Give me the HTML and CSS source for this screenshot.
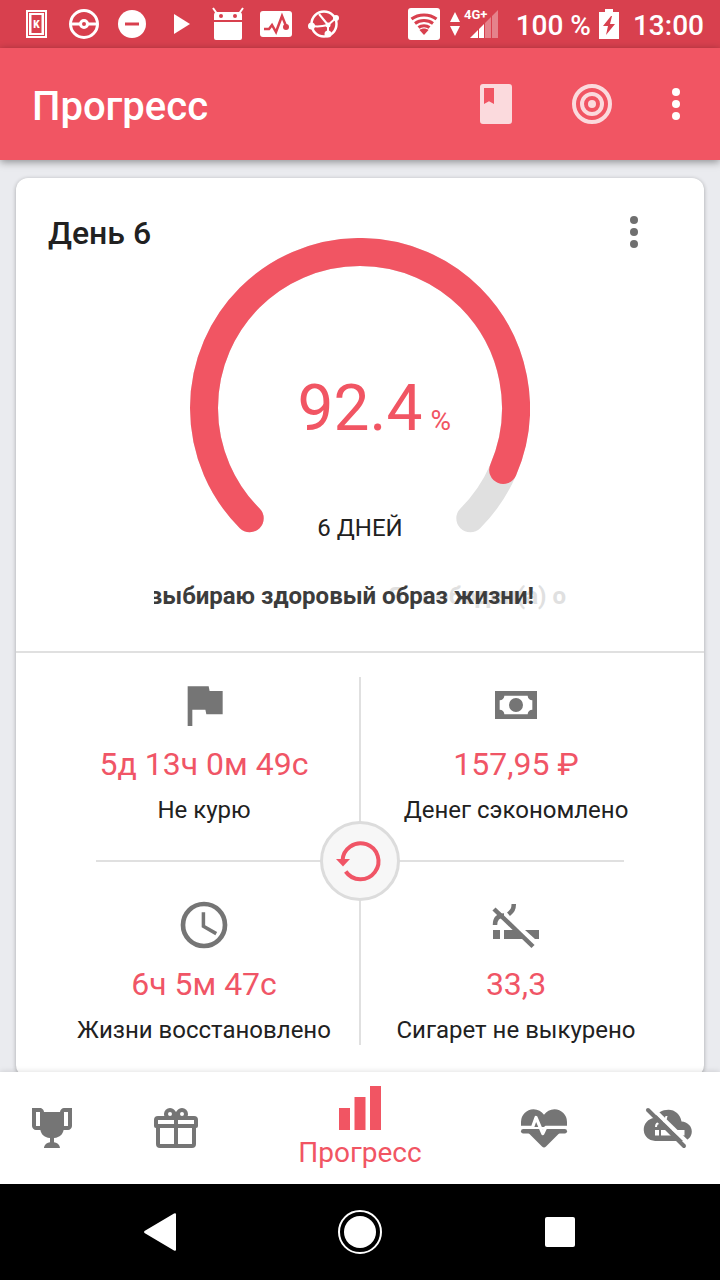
FILE: index.html
```html
<!DOCTYPE html>
<html lang="ru">
<head>
    <meta charset="UTF-8">
    <meta name="viewport" content="width=device-width, initial-scale=1.0">
    <title>Прогресс</title>
    <link rel="stylesheet" href="styles.css">
</head>
<body>
    <div class="status-bar">
        <div class="status-icons">
            <svg viewBox="0 0 48 48">
                <rect x="14" y="10" width="21" height="28" fill="#fff"/>
                <rect x="16.500" y="12.500" width="16" height="23" fill="none" stroke="#d8404e"/>
                <rect x="19.500" y="15" width="10" height="18" fill="#d8404e"/>
                <text class="k-letter" x="24.500" y="28" text-anchor="middle">K</text>
            </svg>
            <svg viewBox="0 0 48 48" fill="none" stroke="#fff" stroke-width="3">
                <circle cx="24" cy="24" r="13.500"/>
                <circle cx="24" cy="24" r="3.500"/>
                <path d="M11 24h9.500M27.500 24H37"/>
            </svg>
            <svg viewBox="0 0 48 48">
                <circle cx="24" cy="24" r="14" fill="#fff"/>
                <path d="M17 24h14" stroke="#d8404e" stroke-width="3"/>
            </svg>
            <svg viewBox="0 0 48 48"><path d="M18 14l16 10-16 10z" fill="#fff"/></svg>
            <svg viewBox="0 0 48 48">
                <path d="M10 22h28v16a2 2 0 0 1-2 2H12a2 2 0 0 1-2-2zM10 20v-5c0-2 1-3 3-3h22c2 0 3 1 3 3v5z" fill="#fff"/>
                <path d="M9 8l3.500 5M39 8l-3.500 5" stroke="#fff" stroke-width="2"/>
                <circle cx="17" cy="16" r="2" fill="#d8404e"/>
                <circle cx="31" cy="16" r="2" fill="#d8404e"/>
            </svg>
            <svg viewBox="0 0 48 48">
                <rect x="8" y="11" width="32" height="26" rx="3" fill="#fff"/>
                <path d="M12 29h5l3-4 4 7 6-16 4 10" fill="none" stroke="#d8404e" stroke-width="2.500"/>
                <circle cx="34" cy="27" r="3" fill="#d8404e"/>
            </svg>
            <svg viewBox="0 0 48 48" fill="none" stroke="#fff">
                <circle cx="24" cy="24" r="12.500" stroke-width="2.500"/>
                <path d="M12 26c6 1 12 0 16-1l8-7M28 25l-9-11M28 25v9" stroke-width="2"/>
                <g fill="#fff" stroke="none">
                    <circle cx="11.500" cy="26" r="3.500"/>
                    <circle cx="28" cy="25" r="2.500"/>
                    <circle cx="36" cy="18" r="3"/>
                    <circle cx="28" cy="34" r="3.500"/>
                </g>
            </svg>
        </div>
        <div class="status-info">
            <svg class="wifi" viewBox="0 0 32 32">
                <rect width="32" height="32" rx="3" fill="#fff"/>
                <g fill="none" stroke="#d8404e" stroke-width="3">
                    <path d="M3.500 11c7-5.500 18-5.500 25 0"/>
                    <path d="M7 15.500c5-4 13-4 18 0"/>
                    <path d="M10.500 19.500c3-2.500 8-2.500 11 0"/>
                </g>
                <path d="M11.500 22c2.500-2 6.500-2 9 0L16 27z" fill="#d8404e"/>
            </svg>
            <svg class="signal" viewBox="0 0 48 32">
                <path d="M0 14l5-10 5 10zM0 18h10L5 28z" fill="#fff"/>
                <text class="signal-label" x="14" y="11">4G+</text>
                <path d="M20 30l8-8v8zM29 21l5-5v14h-5z" fill="#fff"/>
                <path d="M35 15l6-6v21h-6zM42 8l6-6v28h-6z" fill="#fff" opacity=".35"/>
            </svg>
            <span class="charge">100 %</span>
            <svg class="battery" viewBox="0 0 20 30">
                <path d="M6 0h8v3h6v27H0V3h6z" fill="#fff"/>
                <path d="M12 7L4 17h5l-2 9 9-11h-5l2-8z" fill="#d8404e"/>
            </svg>
            <span class="clock">13:00</span>
        </div>
    </div>

    <header class="app-bar">
        <h1>Прогресс</h1>
        <button class="bar-button" aria-label="Дневник">
            <svg class="icon faded" viewBox="0 0 24 24"><path fill-rule="evenodd" d="M5.500 2h13A1.500 1.500 0 0 1 20 3.500v17a1.500 1.500 0 0 1-1.500 1.500h-13A1.500 1.500 0 0 1 4 20.500v-17A1.500 1.500 0 0 1 5.500 2zM6 4v8l2.500-1.400L11 12V4z"/></svg>
        </button>
        <button class="bar-button" aria-label="Цель">
            <svg class="icon" viewBox="0 0 48 48" fill="none" stroke="#fbdadd" stroke-width="4">
                <circle cx="24" cy="24" r="18"/>
                <circle cx="24" cy="24" r="10"/>
                <circle cx="24" cy="24" r="4" fill="#fbdadd" stroke="none"/>
            </svg>
        </button>
        <button class="bar-button narrow" aria-label="Ещё">
            <svg class="icon" viewBox="0 0 24 24"><circle cx="12" cy="6" r="2"/><circle cx="12" cy="12" r="2"/><circle cx="12" cy="18" r="2"/></svg>
        </button>
    </header>

    <main>
        <section class="card">
            <div class="day">
                <h2>День 6</h2>
                <div class="gauge">
                    <!-- 270 degree arc, pathLength makes the dash a percentage -->
                    <svg viewBox="0 0 340 340" fill="none" stroke-width="28" stroke-linecap="round">
                        <path d="M59.700 280.300A156 156 0 1 1 280.300 280.300" stroke="#e0e0e0"/>
                        <path d="M59.700 280.300A156 156 0 1 1 280.300 280.300" stroke="#f15563" pathLength="100" stroke-dasharray="92 100"/>
                    </svg>
                    <div class="gauge-value"><span class="number">92.4</span><span class="percent">%</span></div>
                    <div class="gauge-goal">6 ДНЕЙ</div>
                </div>
                <button class="card-menu" aria-label="Меню карточки">
                    <svg viewBox="0 0 28 36"><circle cx="14" cy="6" r="4"/><circle cx="14" cy="18" r="4"/><circle cx="14" cy="30" r="4"/></svg>
                </button>
                <div class="ticker">
                    <span class="phrase next">Я свободен(а) о</span>
                    <span class="phrase current">Я выбираю здоровый образ жизни!</span>
                </div>
            </div>

            <div class="stats">
                <div class="stat">
                    <svg viewBox="0 0 24 24"><path d="M14.400 6L14 4H5v17h2v-7h5.600l.4 2h7V6z"/></svg>
                    <strong>5д 13ч 0м 49с</strong>
                    <span>Не курю</span>
                </div>
                <div class="stat">
                    <svg viewBox="0 0 24 24"><path d="M3 6h18v12H3V6m9 3a3 3 0 0 1 3 3 3 3 0 0 1-3 3 3 3 0 0 1-3-3 3 3 0 0 1 3-3M7 8a2 2 0 0 1-2 2v4a2 2 0 0 1 2 2h10a2 2 0 0 1 2-2v-4a2 2 0 0 1-2-2H7z"/></svg>
                    <strong>157,95 ₽</strong>
                    <span>Денег сэкономлено</span>
                </div>
                <div class="stat">
                    <svg viewBox="0 0 24 24" fill="none" stroke="#757575"><circle cx="12" cy="12" r="9" stroke-width="2"/><path d="M11.750 6.500v6l5.500 3.200" stroke-width="1.500"/></svg>
                    <strong>6ч 5м 47с</strong>
                    <span>Жизни восстановлено</span>
                </div>
                <div class="stat">
                    <svg viewBox="0 0 56 56">
                        <path d="M5 33h7v9H5zM16 33h13l9 9H16zM37 33h14v9h-4z"/>
                        <path d="M6 12l39 37.500" stroke="#757575" stroke-width="4.500"/>
                        <path d="M25.800 7c0 5-1.500 7-5.300 10.300M7 28c0-6 3-9.500 9-9.500" fill="none" stroke="#757575" stroke-width="4.500"/>
                    </svg>
                    <strong>33,3</strong>
                    <span>Сигарет не выкурено</span>
                </div>
                <button class="reset" aria-label="Обновить">
                    <svg viewBox="0 0 56 56">
                        <path d="M13.700 38.500A18 18 0 1 0 10.500 28" fill="none" stroke="#f05566" stroke-width="4"/>
                        <path d="M4 26h14l-7 7.500z" fill="#f05566"/>
                    </svg>
                </button>
            </div>
        </section>
    </main>

    <nav class="tabs">
        <a href="#" aria-label="Достижения">
            <svg class="icon" viewBox="0 0 24 24"><path d="M20.200 2H18c-.9 0-2 1-2 2H8c0-1-1.100-2-2-2H2v9c0 1 1 2 2 2h2.200c.4 2 1.700 3.700 4.800 4v2.080C8 19.540 8 22 8 22h8s0-2.460-3-2.920V17c3.100-.3 4.400-2 4.800-4H20c1 0 2-1 2-2V2h-1.800M4 11V4h2v7H4m16 0h-2V4h2v7z"/></svg>
        </a>
        <a href="#" aria-label="Награды">
            <svg class="icon" viewBox="0 0 24 24"><path d="M22,12V20A2,2 0 0,1 20,22H4A2,2 0 0,1 2,20V12A1,1 0 0,1 1,11V8A2,2 0 0,1 3,6H6.170C6.060,5.690 6,5.350 6,5A3,3 0 0,1 9,2C10,2 10.880,2.500 11.430,3.240L12,4L12.570,3.240C13.120,2.500 14,2 15,2A3,3 0 0,1 18,5C18,5.350 17.940,5.690 17.830,6H21A2,2 0 0,1 23,8V11A1,1 0 0,1 22,12M4,20H11V12H4V20M20,20V12H13V20H20M9,4A1,1 0 0,0 8,5A1,1 0 0,0 9,6A1,1 0 0,0 10,5A1,1 0 0,0 9,4M15,4A1,1 0 0,0 14,5A1,1 0 0,0 15,6A1,1 0 0,0 16,5A1,1 0 0,0 15,4M3,8V10H11V8H3M13,8V10H21V8H13Z"/></svg>
        </a>
        <a href="#" class="active">
            <svg class="bars" viewBox="0 0 42 44"><path d="M0 22h11v22H0zM15.500 11h11v33h-11zM31 0h11v44H31z"/></svg>
            Прогресс
        </a>
        <a href="#" aria-label="Здоровье">
            <svg class="icon large" viewBox="0 0 56 56">
                <path d="M5 27V22A12.700 12.700 0 0 1 17.500 9.300C22 9.300 25.500 11.500 28 14.800 30.500 11.500 34 9.300 38.500 9.300A12.700 12.700 0 0 1 51 22v5z"/>
                <path d="M12 31h32v1.500L30 46.500q-2 2-4 0L12 32.500z"/>
                <path d="M7.200 31.200h41.600" stroke="#757575" stroke-width="4.400" stroke-linecap="round"/>
                <path d="M4 27.400h12.500L20 17.500l6.800 16 3-6.100H52" fill="none" stroke="#fff" stroke-width="3.200" stroke-linejoin="round"/>
            </svg>
        </a>
        <a href="#" aria-label="Без дыма">
            <svg class="icon large" viewBox="0 0 56 56">
                <path d="M16 41A11.500 11.500 0 0 1 14.500 18C17 13 22 9.700 28.500 9.700c6.500 0 12 4.800 13 11.800 6 .5 10.300 4.500 10.300 10 0 5.500-4.300 9.500-9.300 9.500z"/>
                <path d="M15 30h4v5.500h-4zM21 30h8l5 5.500H21zM32 30h12.500v5.500H38z" fill="#fff"/>
                <path d="M16 27c0-2.500 1-4 3.500-4M26.500 16c0 3-1 4-3 6" fill="none" stroke="#fff" stroke-width="2"/>
                <path d="M11 7l38 37" stroke="#fff" stroke-width="4"/>
                <path d="M8 10l36 36" stroke="#757575" stroke-width="4" stroke-linecap="round"/>
            </svg>
        </a>
    </nav>

    <div class="system-nav">
        <button aria-label="Назад"><svg viewBox="0 0 48 48"><path d="M8.500 23L38 5.500q2-1 2 1v35q0 2-2 1L8.500 25q-1-1 0-2z"/></svg></button>
        <button aria-label="Домой"><svg viewBox="0 0 48 48"><circle cx="24" cy="24" r="16"/><circle cx="24" cy="24" r="21" fill="none" stroke="#fff" stroke-width="2"/></svg></button>
        <button aria-label="Недавние"><svg viewBox="0 0 48 48"><rect x="9" y="9" width="30" height="30" rx="2"/></svg></button>
    </div>
</body>
</html>
```
FILE: styles.css
```css
* {
    box-sizing: border-box;
}

body {
    margin: 0;
    height: 100vh;
    display: flex;
    flex-direction: column;
    background: #eaebef;
    color: #212121;
    font-family: Roboto, sans-serif;
    font-size: 24px;
}

h1, h2 {
    margin: 0;
    font-weight: 500;
}

svg {
    display: block;
    fill: currentColor;
}

svg[fill="none"] {
    fill: none;
}

button {
    padding: 0;
    border: 0;
    background: none;
    color: inherit;
    display: flex;
    align-items: center;
    justify-content: center;
    cursor: pointer;
}

.icon {
    width: 48px;
    height: 48px;
}

.icon.large {
    width: 56px;
    height: 56px;
}

/* Status bar */
.status-bar {
    flex: none;
    height: 48px;
    padding: 0 16px 0 12px;
    display: flex;
    align-items: center;
    justify-content: space-between;
    background: #d8404e;
    color: #fff;
    font-size: 28px;
    font-weight: 500;
    line-height: 44px;
}

.status-icons {
    display: flex;
}

.status-icons svg {
    width: 48px;
    height: 48px;
}

.k-letter {
    font-size: 10px;
    font-weight: 900;
    fill: #fff;
}

.status-info {
    display: flex;
    align-items: center;
}

.charge,
.clock {
    padding-top: 4px;
}

.wifi {
    width: 32px;
    height: 32px;
}

.signal {
    width: 48px;
    height: 32px;
    margin: 0 18px 0 10px;
}

.signal-label {
    font-size: 13px;
    font-weight: 700;
}

.battery {
    width: 20px;
    height: 30px;
    margin: 0 14px 0 8px;
}

/* App bar */
.app-bar {
    flex: none;
    height: 112px;
    padding: 0 8px 0 32px;
    display: flex;
    align-items: center;
    background: #f15563;
    color: #fff;
    box-shadow: 0 2px 8px rgba(0, 0, 0, 0.4);
    z-index: 1;
}

.app-bar h1 {
    flex: 1;
    padding-top: 6px;
    font-size: 40px;
    line-height: 48px;
}

.bar-button {
    width: 96px;
    height: 96px;
}

.bar-button.narrow {
    width: 72px;
}

.faded {
    color: #fbdadd;
}

/* Progress card */
main {
    flex: 1;
    min-height: 0;
    padding: 18px 16px;
    overflow: auto;
    scrollbar-width: none;
}

.card {
    background: #fff;
    border-radius: 12px;
    box-shadow: 0 1px 4px rgba(0, 0, 0, 0.3);
}

.day {
    padding: 36px 32px 41px;
    display: grid;
    grid-template-columns: 1fr 340px 1fr;
    border-bottom: 2px solid #e0e0e0;
}

.day h2 {
    font-size: 32px;
    line-height: 38px;
}

.gauge {
    margin-top: 24px;
    display: grid;
    text-align: center;
}

.gauge > * {
    grid-area: 1 / 1;
}

.gauge-value {
    align-self: center;
    padding-top: 14px;
    display: grid;
    grid-template-columns: 1fr auto 1fr;
    align-items: baseline;
    color: #f15563;
    line-height: 76px;
}

.number {
    grid-column: 2;
    font-size: 64px;
}

.percent {
    padding-left: 8px;
    font-size: 28px;
    text-align: left;
}

.gauge-goal {
    align-self: end;
    margin-bottom: 35px;
    line-height: 30px;
}

.card-menu {
    justify-self: end;
    width: 28px;
    height: 36px;
    margin-right: 24px;
    color: #6f6f6f;
}

.card-menu svg {
    width: 28px;
}

.ticker {
    grid-column: 1 / -1;
    justify-self: center;
    position: relative;
    width: 412px;
    height: 28px;
    margin-top: 4px;
    overflow: hidden;
    font-weight: 700;
    line-height: 28px;
    white-space: nowrap;
}

.phrase {
    position: absolute;
    top: 0;
}

.phrase.current {
    right: 32px;
    color: #3c3c3c;
}

.phrase.next {
    right: 0;
    color: #e0e0e0;
}

/* Stats */
.stats {
    position: relative;
    margin: 0 32px;
    padding: 24px 0 32px;
    display: grid;
    grid-template-columns: 1fr 1fr;
    row-gap: 72px;
}

.stats::before,
.stats::after {
    content: "";
    position: absolute;
    background: #e0e0e0;
}

.stats::before {
    top: 24px;
    bottom: 32px;
    left: calc(50% - 1px);
    width: 2px;
}

.stats::after {
    top: calc(50% - 5px);
    left: 48px;
    right: 48px;
    height: 2px;
}

.stat {
    display: flex;
    flex-direction: column;
    align-items: center;
    gap: 12px;
    line-height: 30px;
    white-space: nowrap;
}

.stat svg {
    width: 56px;
    height: 56px;
    color: #757575;
}

.stat strong {
    color: #f05566;
    font-size: 32px;
    font-weight: 400;
    line-height: 38px;
}

.reset {
    position: absolute;
    z-index: 1;
    top: calc(50% - 44px);
    left: calc(50% - 40px);
    width: 80px;
    height: 80px;
    border: 3px solid #dcdcdc;
    border-radius: 50%;
    background: #f7f7f7;
}

.reset svg {
    width: 56px;
    height: 56px;
}

/* Tabs */
.tabs {
    flex: none;
    height: 112px;
    display: grid;
    grid-template-columns: 13fr 18fr 28fr 18fr 13fr;
    background: #fff;
    box-shadow: 0 0 6px rgba(0, 0, 0, 0.15);
    z-index: 1;
}

.tabs a {
    display: flex;
    flex-direction: column;
    align-items: center;
    justify-content: center;
    color: #757575;
    font-size: 28px;
    line-height: 34px;
    text-decoration: none;
}

.tabs .active {
    gap: 6px;
    color: #f15563;
}

.bars {
    width: 42px;
    height: 44px;
}

/* Android navigation */
.system-nav {
    flex: none;
    height: 96px;
    padding: 0 60px;
    display: grid;
    grid-template-columns: repeat(3, 1fr);
    background: #000;
    color: #fff;
    z-index: 1;
}

.system-nav svg {
    width: 48px;
    height: 48px;
}
```
